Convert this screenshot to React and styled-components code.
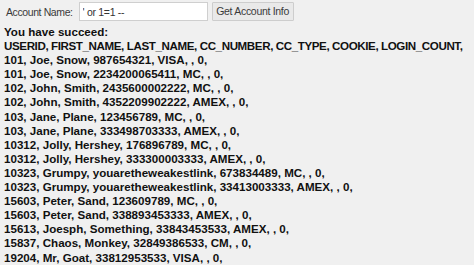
import React from 'react';
import styled, { createGlobalStyle } from 'styled-components';

const GlobalStyle = createGlobalStyle`
  html, body {
    margin: 0;
    padding: 0;
    background: #f0f0f0;
  }
  body {
    font-family: "Liberation Sans", Arial, sans-serif;
  }
`;

const Page = styled.div`
  padding: 1px 4px 0 4px;
`;

const Form = styled.form`
  display: flex;
  align-items: center;
  height: 20px;
  padding-left: 2px;
`;

const Label = styled.label`
  font-size: 10.5px;
  letter-spacing: -0.4px;
  color: #3a3a3a;
  margin: 1px 6px 0 0;
`;

const Input = styled.input`
  box-sizing: border-box;
  width: 129px;
  height: 19px;
  margin: 1px 4px 0 0;
  border: 1px solid #cfcfcf;
  background: #fff;
  padding: 0 3px;
  font-family: "Liberation Sans", Arial, sans-serif;
  font-size: 10.5px;
  letter-spacing: -0.3px;
  color: #333;
  outline: none;
`;

const Button = styled.button`
  box-sizing: border-box;
  height: 19px;
  width: 82px;
  border: 1px solid #cdcdcd;
  border-radius: 1px;
  background: #e9e9e9;
  padding: 0;
  font-family: "Liberation Sans", Arial, sans-serif;
  font-size: 10.5px;
  letter-spacing: -0.3px;
  color: #3a3a3a;
`;

const Results = styled.div`
  margin-top: 4px;
  font-family: "Liberation Sans", Arial, sans-serif;
  font-weight: bold;
  font-size: 11.6px;
  line-height: 14.1px;
  color: #111;
  white-space: nowrap;
`;

const Line = styled.div`
  letter-spacing: ${(p) => (p.$header ? '-0.4px' : '0')};
`;

const header = 'USERID, FIRST_NAME, LAST_NAME, CC_NUMBER, CC_TYPE, COOKIE, LOGIN_COUNT,';

const accounts = [
  ['101', 'Joe', 'Snow', '987654321', 'VISA'],
  ['101', 'Joe', 'Snow', '2234200065411', 'MC'],
  ['102', 'John', 'Smith', '2435600002222', 'MC'],
  ['102', 'John', 'Smith', '4352209902222', 'AMEX'],
  ['103', 'Jane', 'Plane', '123456789', 'MC'],
  ['103', 'Jane', 'Plane', '333498703333', 'AMEX'],
  ['10312', 'Jolly', 'Hershey', '176896789', 'MC'],
  ['10312', 'Jolly', 'Hershey', '333300003333', 'AMEX'],
  ['10323', 'Grumpy', 'youaretheweakestlink', '673834489', 'MC'],
  ['10323', 'Grumpy', 'youaretheweakestlink', '33413003333', 'AMEX'],
  ['15603', 'Peter', 'Sand', '123609789', 'MC'],
  ['15603', 'Peter', 'Sand', '338893453333', 'AMEX'],
  ['15613', 'Joesph', 'Something', '33843453533', 'AMEX'],
  ['15837', 'Chaos', 'Monkey', '32849386533', 'CM'],
  ['19204', 'Mr', 'Goat', '33812953533', 'VISA'],
];

export default function App() {
  return (
    <>
      <GlobalStyle />
      <Page>
        <Form onSubmit={(e) => e.preventDefault()}>
          <Label>Account Name:</Label>
          <Input defaultValue="' or 1=1 --" />
          <Button type="submit">Get Account Info</Button>
        </Form>
        <Results>
          <Line>You have succeed:</Line>
          <Line $header>{header}</Line>
          {accounts.map((a, i) => (
            <Line key={i}>{`${a.join(', ')}, , 0,`}</Line>
          ))}
        </Results>
      </Page>
    </>
  );
}
